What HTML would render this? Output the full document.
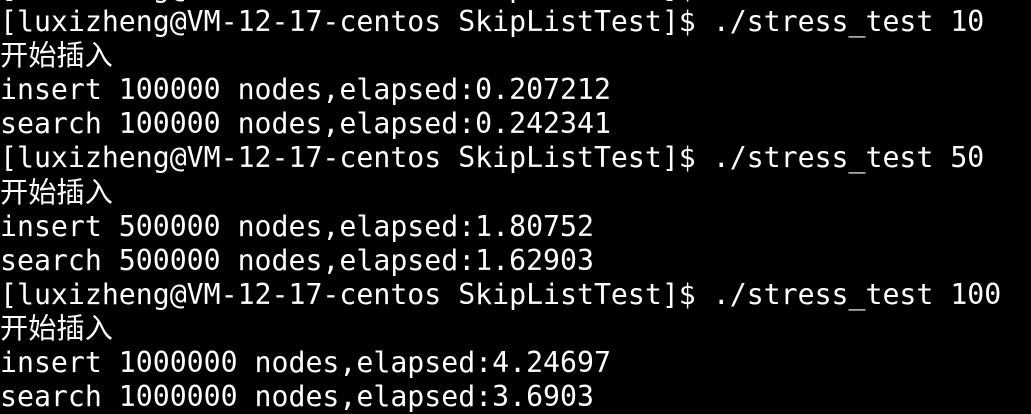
<!DOCTYPE html>
<html><head><meta charset="utf-8"><style>
html,body{margin:0;padding:0;background:#000;width:1031px;height:413px;overflow:hidden}
pre{margin:0;position:absolute;left:0;top:-29px;color:#fff;font-family:"DejaVu Sans Mono","Noto Sans CJK SC",monospace;font-size:28.2px;line-height:34.1px;white-space:pre}
</style></head><body><pre>[luxizheng@VM-12-17-centos SkipListTest]$ 
[luxizheng@VM-12-17-centos SkipListTest]$ ./stress_test 10
开始插入
insert 100000 nodes,elapsed:0.207212
search 100000 nodes,elapsed:0.242341
[luxizheng@VM-12-17-centos SkipListTest]$ ./stress_test 50
开始插入
insert 500000 nodes,elapsed:1.80752
search 500000 nodes,elapsed:1.62903
[luxizheng@VM-12-17-centos SkipListTest]$ ./stress_test 100
开始插入
insert 1000000 nodes,elapsed:4.24697
search 1000000 nodes,elapsed:3.6903</pre></body></html>
